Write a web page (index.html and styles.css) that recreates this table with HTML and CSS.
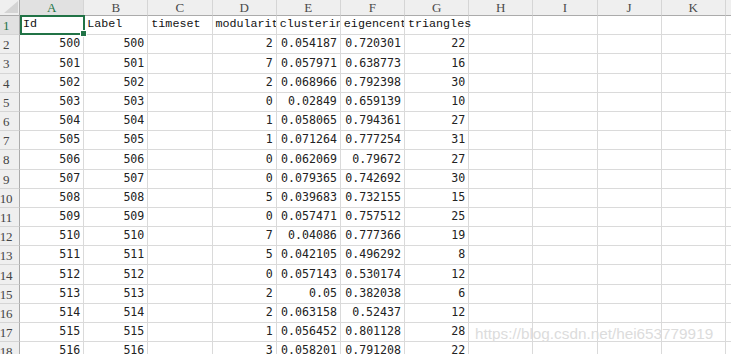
FILE: index.html
```html
<!DOCTYPE html>
<html>
<head>
<meta charset="utf-8">
<link rel="stylesheet" href="styles.css">
</head>
<body>
<div class="sheet">
  <div class="corner"><svg class="tri" width="14" height="12" viewBox="0 0 14 12"><polygon points="14,0 14,12 0,12" fill="#d4d4d4"/></svg></div>
  <div class="ch sel">A</div><div class="ch">B</div><div class="ch">C</div><div class="ch">D</div><div class="ch">E</div><div class="ch">F</div><div class="ch">G</div><div class="ch">H</div><div class="ch">I</div><div class="ch">J</div><div class="ch">K</div><div class="ch"></div>

  <div class="rh sel">1</div><div class="c a1">Id</div><div class="c">Label</div><div class="c">timeset</div><div class="c">modularity_class</div><div class="c">clustering</div><div class="c">eigencentrality</div><div class="c ov">triangles</div><div class="c"></div><div class="c"></div><div class="c"></div><div class="c"></div><div class="c"></div>

  <div class="rh">2</div><div class="c n">500</div><div class="c n">500</div><div class="c"></div><div class="c n">2</div><div class="c n">0.054187</div><div class="c n">0.720301</div><div class="c n">22</div><div class="c"></div><div class="c"></div><div class="c"></div><div class="c"></div><div class="c"></div>
  <div class="rh">3</div><div class="c n">501</div><div class="c n">501</div><div class="c"></div><div class="c n">7</div><div class="c n">0.057971</div><div class="c n">0.638773</div><div class="c n">16</div><div class="c"></div><div class="c"></div><div class="c"></div><div class="c"></div><div class="c"></div>
  <div class="rh">4</div><div class="c n">502</div><div class="c n">502</div><div class="c"></div><div class="c n">2</div><div class="c n">0.068966</div><div class="c n">0.792398</div><div class="c n">30</div><div class="c"></div><div class="c"></div><div class="c"></div><div class="c"></div><div class="c"></div>
  <div class="rh">5</div><div class="c n">503</div><div class="c n">503</div><div class="c"></div><div class="c n">0</div><div class="c n">0.02849</div><div class="c n">0.659139</div><div class="c n">10</div><div class="c"></div><div class="c"></div><div class="c"></div><div class="c"></div><div class="c"></div>
  <div class="rh">6</div><div class="c n">504</div><div class="c n">504</div><div class="c"></div><div class="c n">1</div><div class="c n">0.058065</div><div class="c n">0.794361</div><div class="c n">27</div><div class="c"></div><div class="c"></div><div class="c"></div><div class="c"></div><div class="c"></div>
  <div class="rh">7</div><div class="c n">505</div><div class="c n">505</div><div class="c"></div><div class="c n">1</div><div class="c n">0.071264</div><div class="c n">0.777254</div><div class="c n">31</div><div class="c"></div><div class="c"></div><div class="c"></div><div class="c"></div><div class="c"></div>
  <div class="rh">8</div><div class="c n">506</div><div class="c n">506</div><div class="c"></div><div class="c n">0</div><div class="c n">0.062069</div><div class="c n">0.79672</div><div class="c n">27</div><div class="c"></div><div class="c"></div><div class="c"></div><div class="c"></div><div class="c"></div>
  <div class="rh">9</div><div class="c n">507</div><div class="c n">507</div><div class="c"></div><div class="c n">0</div><div class="c n">0.079365</div><div class="c n">0.742692</div><div class="c n">30</div><div class="c"></div><div class="c"></div><div class="c"></div><div class="c"></div><div class="c"></div>
  <div class="rh">10</div><div class="c n">508</div><div class="c n">508</div><div class="c"></div><div class="c n">5</div><div class="c n">0.039683</div><div class="c n">0.732155</div><div class="c n">15</div><div class="c"></div><div class="c"></div><div class="c"></div><div class="c"></div><div class="c"></div>
  <div class="rh">11</div><div class="c n">509</div><div class="c n">509</div><div class="c"></div><div class="c n">0</div><div class="c n">0.057471</div><div class="c n">0.757512</div><div class="c n">25</div><div class="c"></div><div class="c"></div><div class="c"></div><div class="c"></div><div class="c"></div>
  <div class="rh">12</div><div class="c n">510</div><div class="c n">510</div><div class="c"></div><div class="c n">7</div><div class="c n">0.04086</div><div class="c n">0.777366</div><div class="c n">19</div><div class="c"></div><div class="c"></div><div class="c"></div><div class="c"></div><div class="c"></div>
  <div class="rh">13</div><div class="c n">511</div><div class="c n">511</div><div class="c"></div><div class="c n">5</div><div class="c n">0.042105</div><div class="c n">0.496292</div><div class="c n">8</div><div class="c"></div><div class="c"></div><div class="c"></div><div class="c"></div><div class="c"></div>
  <div class="rh">14</div><div class="c n">512</div><div class="c n">512</div><div class="c"></div><div class="c n">0</div><div class="c n">0.057143</div><div class="c n">0.530174</div><div class="c n">12</div><div class="c"></div><div class="c"></div><div class="c"></div><div class="c"></div><div class="c"></div>
  <div class="rh">15</div><div class="c n">513</div><div class="c n">513</div><div class="c"></div><div class="c n">2</div><div class="c n">0.05</div><div class="c n">0.382038</div><div class="c n">6</div><div class="c"></div><div class="c"></div><div class="c"></div><div class="c"></div><div class="c"></div>
  <div class="rh">16</div><div class="c n">514</div><div class="c n">514</div><div class="c"></div><div class="c n">2</div><div class="c n">0.063158</div><div class="c n">0.52437</div><div class="c n">12</div><div class="c"></div><div class="c"></div><div class="c"></div><div class="c"></div><div class="c"></div>
  <div class="rh">17</div><div class="c n">515</div><div class="c n">515</div><div class="c"></div><div class="c n">1</div><div class="c n">0.056452</div><div class="c n">0.801128</div><div class="c n">28</div><div class="c"></div><div class="c"></div><div class="c"></div><div class="c"></div><div class="c"></div>
  <div class="rh">18</div><div class="c n">516</div><div class="c n">516</div><div class="c"></div><div class="c n">3</div><div class="c n">0.058201</div><div class="c n">0.791208</div><div class="c n">22</div><div class="c"></div><div class="c"></div><div class="c"></div><div class="c"></div><div class="c"></div>

  <div class="watermark">https://blog.csdn.net/hei653779919</div>
</div>
</body>
</html>
```

FILE: styles.css
```css
html, body {
  margin: 0;
  padding: 0;
  background: #fff;
  overflow: hidden;
}

.sheet {
  position: relative;
  display: grid;
  grid-template-columns: 20px repeat(11, 64.18px) 1fr;
  grid-template-rows: 16px repeat(18, 19.2px);
  width: 731px;
  height: 354px;
  overflow: hidden;
  font-family: "Liberation Mono", "DejaVu Sans Mono", monospace;
}

.corner {
  position: relative;
  box-sizing: border-box;
  background: #efefef;
  border-right: 1px solid #ababab;
  border-bottom: 1px solid #ababab;
}

.tri {
  position: absolute;
  right: 1px;
  bottom: 2px;
}

.ch {
  box-sizing: border-box;
  display: flex;
  align-items: center;
  justify-content: center;
  background: #efefef;
  border-right: 1px solid #d5d5d5;
  border-bottom: 1px solid #ababab;
  font-family: "Liberation Serif", serif;
  font-size: 13px;
  color: #4a4a4a;
  padding-top: 1px;
}

.ch.sel {
  background: #e1e1e1;
  color: #217346;
}

.rh {
  box-sizing: border-box;
  display: flex;
  align-items: center;
  justify-content: center;
  padding-right: 7px;
  padding-top: 2px;
  background: #efefef;
  border-right: 1px solid #ababab;
  border-bottom: 1px solid #d5d5d5;
  font-family: "Liberation Serif", serif;
  font-size: 13px;
  color: #444;
  letter-spacing: -0.3px;
}

.rh.sel {
  background: #e1e1e1;
  color: #217346;
}

.c {
  box-sizing: border-box;
  display: flex;
  align-items: flex-end;
  justify-content: flex-start;
  padding: 0 3px 3px 3px;
  border-right: 1px solid #dadada;
  border-bottom: 1px solid #dadada;
  font-size: 11.7px;
  line-height: 13px;
  color: #111;
  white-space: nowrap;
  overflow: hidden;
  min-width: 0;
}

.c.n {
  justify-content: flex-end;
  font-family: "DejaVu Sans Mono", "Liberation Mono", monospace;
  font-size: 11.6px;
  color: #222;
}

.c.ov {
  overflow: visible;
}

.c.a1 {
  position: relative;
  overflow: visible;
}

.c.a1::before {
  content: "";
  position: absolute;
  left: 0;
  top: -1px;
  right: -2px;
  bottom: -1px;
  border: 2px solid #217346;
  z-index: 2;
}

.c.a1::after {
  content: "";
  position: absolute;
  right: -4px;
  bottom: -3px;
  width: 5px;
  height: 5px;
  background: #217346;
  border: 1px solid #fff;
  z-index: 3;
}

.watermark {
  position: absolute;
  left: 475px;
  top: 325px;
  font-family: "Liberation Sans", Arial, sans-serif;
  font-size: 15.3px;
  color: #dcdcdc;
  white-space: nowrap;
  z-index: 4;
}
```
